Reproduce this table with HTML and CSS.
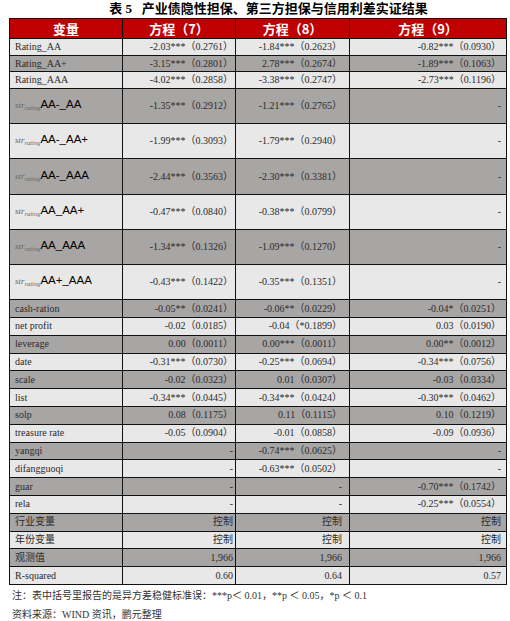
FILE: index.html
```html
<!DOCTYPE html>
<html lang="zh">
<head>
<meta charset="utf-8">
<title>表5</title>
<link rel="stylesheet" href="styles.css">
</head>
<body>
<div class="page">
  <h1 class="title">表 5&nbsp;&nbsp;&nbsp;产业债隐性担保、第三方担保与信用利差实证结果</h1>
  <table class="tbl">
    <colgroup>
      <col class="c1"><col class="c2"><col class="c3"><col class="c4">
    </colgroup>
    <thead>
      <tr class="hd"><th>变量</th><th>方程（7）</th><th>方程（8）</th><th>方程（9）</th></tr>
    </thead>
    <tbody>
      <tr class="top lt"><td>Rating_AA</td><td>-2.03***（0.2761）</td><td>-1.84***（0.2623）</td><td>-0.82***（0.0930）</td></tr>
      <tr class="top dk"><td>Rating_AA+</td><td>-3.15***（0.2801）</td><td>2.78***（0.2674）</td><td>-1.89***（0.1063）</td></tr>
      <tr class="top lt"><td>Rating_AAA</td><td>-4.02***（0.2858）</td><td>-3.38***（0.2747）</td><td>-2.73***（0.1196）</td></tr>
      <tr class="tall dk"><td><span class="str">str<sub>rating</sub></span><span class="lab">AA-_AA</span></td><td>-1.35***（0.2912）</td><td>-1.21***（0.2765）</td><td>-</td></tr>
      <tr class="tall lt"><td><span class="str">str<sub>rating</sub></span><span class="lab">AA-_AA+</span></td><td>-1.99***（0.3093）</td><td>-1.79***（0.2940）</td><td>-</td></tr>
      <tr class="tall dk"><td><span class="str">str<sub>rating</sub></span><span class="lab">AA-_AAA</span></td><td>-2.44***（0.3563）</td><td>-2.30***（0.3381）</td><td>-</td></tr>
      <tr class="tall lt"><td><span class="str">str<sub>rating</sub></span><span class="lab">AA_AA+</span></td><td>-0.47***（0.0840）</td><td>-0.38***（0.0799）</td><td>-</td></tr>
      <tr class="tall dk"><td><span class="str">str<sub>rating</sub></span><span class="lab">AA_AAA</span></td><td>-1.34***（0.1326）</td><td>-1.09***（0.1270）</td><td>-</td></tr>
      <tr class="tall lt"><td><span class="str">str<sub>rating</sub></span><span class="lab">AA+_AAA</span></td><td>-0.43***（0.1422）</td><td>-0.35***（0.1351）</td><td>-</td></tr>
      <tr class="row dk"><td>cash-ration</td><td>-0.05**（0.0241）</td><td>-0.06**（0.0229）</td><td>-0.04*（0.0251）</td></tr>
      <tr class="row lt"><td>net profit</td><td>-0.02（0.0185）</td><td>-0.04（*0.1899）</td><td>0.03（0.0190）</td></tr>
      <tr class="row dk"><td>leverage</td><td>0.00（0.0011）</td><td>0.00***（0.0011）</td><td>0.00**（0.0012）</td></tr>
      <tr class="row lt"><td>date</td><td>-0.31***（0.0730）</td><td>-0.25***（0.0694）</td><td>-0.34***（0.0756）</td></tr>
      <tr class="row dk"><td>scale</td><td>-0.02（0.0323）</td><td>0.01（0.0307）</td><td>-0.03（0.0334）</td></tr>
      <tr class="row lt"><td>list</td><td>-0.34***（0.0445）</td><td>-0.34***（0.0424）</td><td>-0.30***（0.0462）</td></tr>
      <tr class="row dk"><td>solp</td><td>0.08（0.1175）</td><td>0.11（0.1115）</td><td>0.10（0.1219）</td></tr>
      <tr class="row lt"><td>treasure rate</td><td>-0.05（0.0904）</td><td>-0.01（0.0858）</td><td>-0.09（0.0936）</td></tr>
      <tr class="row dk"><td>yangqi</td><td>-</td><td>-0.74***（0.0625）</td><td>-</td></tr>
      <tr class="row lt"><td>difangguoqi</td><td>-</td><td>-0.63***（0.0502）</td><td>-</td></tr>
      <tr class="row dk"><td>guar</td><td>-</td><td>-</td><td>-0.70***（0.1742）</td></tr>
      <tr class="row lt"><td>rela</td><td>-</td><td>-</td><td>-0.25***（0.0554）</td></tr>
      <tr class="row dk"><td>行业变量</td><td>控制</td><td>控制</td><td>控制</td></tr>
      <tr class="row lt"><td>年份变量</td><td>控制</td><td>控制</td><td>控制</td></tr>
      <tr class="row dk"><td>观测值</td><td>1,966</td><td>1,966</td><td>1,966</td></tr>
      <tr class="row lt"><td>R-squared</td><td>0.60</td><td>0.64</td><td>0.57</td></tr>
    </tbody>
  </table>
  <p class="note">注：表中括号里报告的是异方差稳健标准误：***p＜ 0.01，**p ＜ 0.05，*p ＜ 0.1</p>
  <p class="note">资料来源：WIND 资讯，鹏元整理</p>
</div>
</body>
</html>
```

FILE: styles.css
```css
html, body {
  margin: 0;
  padding: 0;
  background: #ffffff;
}

.page {
  padding: 2px 0 0 9px;
  width: 497px;
  font-family: "Liberation Serif", "Noto Sans CJK SC", serif;
  color: #2b2b2b;
}

.title {
  margin: 0 0 3px 0;
  padding-left: 22px;
  height: 13px;
  line-height: 13px;
  font-size: 13px;
  font-weight: bold;
  text-align: center;
  color: #000;
  font-family: "Liberation Serif", "Noto Sans CJK SC", serif;
}

.tbl {
  width: 497px;
  border-collapse: collapse;
  table-layout: fixed;
  font-size: 10px;
}

.c1 { width: 113px; }
.c2 { width: 113px; }
.c3 { width: 114px; }
.c4 { width: 157px; }

.tbl th,
.tbl td {
  border: 1px solid #111;
  padding: 0;
  vertical-align: middle;
  white-space: nowrap;
  line-height: 12px;
}

.hd { height: 20px; }

.hd th {
  background: #c00000;
  color: #ffffff;
  font-family: "Noto Sans CJK SC", sans-serif;
  font-size: 13px;
  font-weight: bold;
  text-align: center;
  line-height: 16px;
}

.tbl td { text-align: right; }
.tbl td:first-child {
  text-align: left;
  padding-left: 5px;
}
.tbl td:nth-child(2) { padding-right: 2px; }
.tbl td:nth-child(3) { padding-right: 7px; }
.tbl td:nth-child(4) { padding-right: 5px; }

.top { height: 16.7px; }
.tall { height: 35.2px; }
.row { height: 17.8px; }

.lt td { background: #e8e8e8; }
.dk td { background: #a8a5a5; }

.str {
  font-family: "Liberation Serif", serif;
  font-style: italic;
  font-size: 9px;
  color: #666;
}

.str sub {
  font-size: 6.5px;
  vertical-align: -2px;
}

.lab {
  font-family: "Liberation Sans", Arial, sans-serif;
  font-size: 11.5px;
  color: #000;
}

.note {
  margin: 3px 0 0 3px;
  font-size: 10px;
  line-height: 15px;
  color: #333;
}

.note + .note {
  margin-top: 4px;
}
```
